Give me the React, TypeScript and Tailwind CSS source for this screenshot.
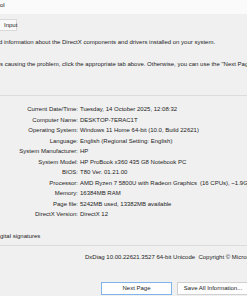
import type { ReactNode } from 'react';

// text that is cut by the left edge of the window: the prefix hangs off to the left
function Clipped({ pre, children, x = 0 }: { pre: string; children: ReactNode; x?: number }) {
  return (
    <div className="flex whitespace-nowrap" style={{ paddingLeft: x > 0 ? x : 0, marginLeft: x < 0 ? x : 0 }}>
      <div className="w-0 flex justify-end">
        <span>{pre}</span>
      </div>
      <span>{children}</span>
    </div>
  );
}

const rows: [string, ReactNode][] = [
  ['Current Date/Time:', 'Tuesday, 14 October 2025, 12:08:32'],
  ['Computer Name:', 'DESKTOP-7ERAC1T'],
  ['Operating System:', 'Windows 11 Home 64-bit (10.0, Build 22621)'],
  ['Language:', 'English (Regional Setting: English)'],
  ['System Manufacturer:', 'HP'],
  ['System Model:', 'HP ProBook x360 435 G8 Notebook PC'],
  ['BIOS:', 'T80 Ver. 01.21.00'],
  [
    'Processor:',
    <span className="flex">
      <span className="w-[120px] shrink-0">AMD Ryzen 7 5800U with Radeon Graphics</span>
      <span>(16 CPUs), ~1.9GHz</span>
    </span>,
  ],
  ['Memory:', '16384MB RAM'],
  ['Page file:', '5242MB used, 13382MB available'],
  ['DirectX Version:', 'DirectX 12'],
];

export default function App() {
  return (
    <div
      className="w-[247px] h-[296px] overflow-hidden bg-[#f0f0f0] text-[#1c1c1c] text-[6px]"
      style={{ fontFamily: '"Liberation Sans", Arial, sans-serif' }}
    >
      {/* Title bar */}
      <div className="h-[14px] bg-[#fafafa] leading-[10px]">
        <Clipped pre="DirectX Diagnostic To">ol</Clipped>
      </div>

      {/* Tabs */}
      <div className="mt-[5px] flex">
        <div className="h-[12px] w-[18px] ml-[-1px] border border-[#d9d9d9] bg-[#f9f9f9] leading-[11px] pl-[4px] whitespace-nowrap">
          Input
        </div>
      </div>

      <div className="mt-[6px] leading-[10px]">
        <Clipped pre="This tool reports detaile" x={-1}>
          d information about the DirectX components and drivers installed on your system.
        </Clipped>
      </div>
      <div className="mt-[12px] leading-[10px]">
        <Clipped pre="If you know what area i">
          s causing the problem, click the appropriate tab above. Otherwise, you can use the "Next Page" button below to visit each page in sequence.
        </Clipped>
      </div>

      <div className="mt-[26px] border-t border-[#dcdcdc]" />

      {/* System information */}
      <div className="mt-[8px] grid grid-cols-[78px_1fr] gap-x-[2px] leading-[10.5px]">
        {rows.map(([label, value]) => (
          <div key={label} className="contents">
            <div className="text-right whitespace-nowrap">{label}</div>
            <div className="whitespace-nowrap">{value}</div>
          </div>
        ))}
      </div>

      <div className="mt-[11.5px] leading-[10px]">
        <Clipped pre="Check for WHQL di">gital signatures</Clipped>
      </div>

      <div className="mt-[4px] border-t border-[#dcdcdc]" />

      <div className="mt-[5.5px] leading-[10px] pl-[85px] whitespace-nowrap">
        DxDiag 10.00.22621.3527 64-bit Unicode&nbsp; Copyright © Microsoft. All rights reserved.
      </div>

      {/* Buttons */}
      <div className="mt-[20px] flex gap-[5px] pl-[101px]">
        <button className="h-[13px] w-[71px] shrink-0 border border-[#7eb4ea] bg-white text-[6px] leading-[11px] text-center">
          Next Page
        </button>
        <button className="h-[13px] w-[72px] shrink-0 border border-[#d0d0d0] bg-[#fdfdfd] text-[6px] leading-[11px] text-center whitespace-nowrap">
          Save All Information...
        </button>
      </div>
    </div>
  );
}
